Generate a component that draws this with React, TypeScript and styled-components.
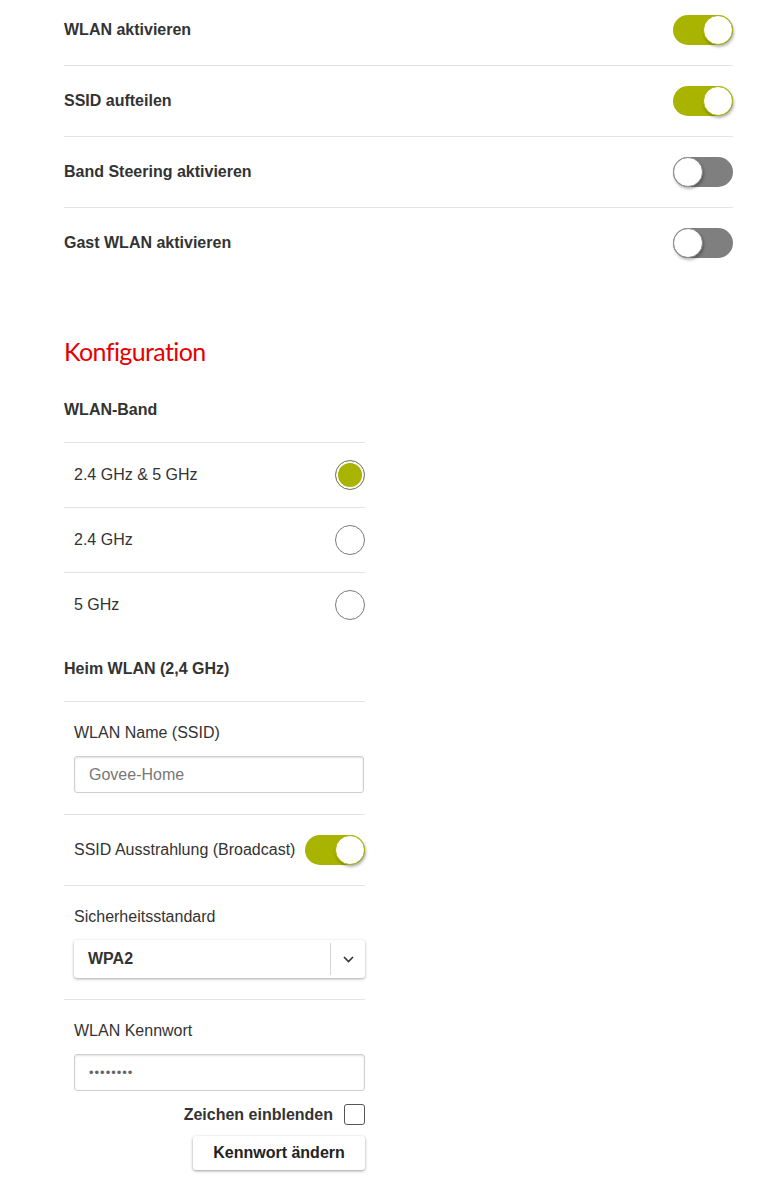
import React from "react";
import styled, { createGlobalStyle } from "styled-components";

const GlobalStyle = createGlobalStyle`
  html, body { margin: 0; padding: 0; background: #ffffff; }
  body { font-family: "Liberation Sans", Arial, sans-serif; color: #333333; font-size: 16px; }
  * { box-sizing: border-box; }
`;

const Page = styled.div`
  padding: 0 36px 40px 64px;
  margin-top: -5px;
`;

const SwitchList = styled.div`
  display: flex;
  flex-direction: column;
`;

const SwitchRow = styled.div<{ $last?: boolean }>`
  display: flex;
  align-items: center;
  justify-content: space-between;
  height: 71px;
  border-bottom: 1px solid ${(p) => (p.$last ? "transparent" : "#e3e3e3")};
`;

const RowLabel = styled.span`
  font-weight: 700;
  font-size: 16px;
  line-height: 20px;
  color: #333;
`;

const Track = styled.span<{ $on: boolean }>`
  position: relative;
  display: inline-block;
  flex: none;
  width: 60px;
  height: 30px;
  border-radius: 15px;
  background: ${(p) => (p.$on ? "#a8b400" : "#7f7f7f")};
`;

const Knob = styled.span<{ $on: boolean }>`
  position: absolute;
  top: 0;
  left: ${(p) => (p.$on ? "30px" : "0")};
  width: 30px;
  height: 30px;
  border-radius: 50%;
  background: #fff;
  border: 1px solid ${(p) => (p.$on ? "#a8b400" : "#8a8a8a")};
  box-shadow: 1px 2px 3px rgba(0, 0, 0, 0.3);
`;

const Toggle = ({ on }: { on: boolean }) => (
  <Track $on={on}>
    <Knob $on={on} />
  </Track>
);

const Heading = styled.h2`
  margin: 55px 0 0;
  height: 44px;
  font-family: "Lato", "Open Sans", sans-serif;
  font-weight: 400;
  font-size: 25px;
  line-height: 34px;
  letter-spacing: -0.6px;
  color: #e60000;
`;

const Config = styled.div`
  width: 301px;
  display: flex;
  flex-direction: column;
`;

const SubHeading = styled.div`
  height: 64px;
  display: flex;
  align-items: center;
  font-weight: 700;
  font-size: 16px;
  color: #333;
`;

const RadioRow = styled.label`
  display: flex;
  align-items: center;
  justify-content: space-between;
  height: 65px;
  padding-left: 10px;
  border-top: 1px solid #e3e3e3;
  font-size: 16px;
  color: #333;
`;

const RadioCircle = styled.span<{ $checked: boolean }>`
  flex: none;
  width: 30px;
  height: 30px;
  border-radius: 50%;
  border: 1px solid #7a7a7a;
  background: ${(p) => (p.$checked ? "#a8b400" : "#fff")};
  box-shadow: ${(p) => (p.$checked ? "inset 0 0 0 2px #fff" : "none")};
`;

const FieldBlock = styled.div<{ $last?: boolean }>`
  display: flex;
  flex-direction: column;
  padding: 21px 0 ${(p) => (p.$last ? "0" : "21px")} 10px;
  border-top: 1px solid #e3e3e3;
`;

const FieldLabel = styled.div`
  font-size: 16px;
  line-height: 20px;
  color: #333;
  margin-bottom: 13px;
`;

const TextInput = styled.div<{ $wide?: boolean }>`
  width: ${(p) => (p.$wide ? "291px" : "290px")};
  height: 37px;
  display: flex;
  align-items: center;
  padding: 0 14px;
  border: 1px solid #cfcfcf;
  border-radius: 3px;
  box-shadow: inset 0 1px 2px rgba(0, 0, 0, 0.12);
  font-size: 16px;
  color: #777;
`;

const Dots = styled.span`
  font-size: 13px;
  letter-spacing: 1px;
  color: #666;
`;

const ToggleRow = styled.div`
  display: flex;
  align-items: center;
  justify-content: space-between;
  height: 71px;
  padding-left: 10px;
  border-top: 1px solid #e3e3e3;
  font-size: 16px;
  color: #333;
`;

const Select = styled.div`
  width: 291px;
  height: 38px;
  display: flex;
  align-items: center;
  border-radius: 3px;
  background: #fff;
  box-shadow: 0 1px 3px rgba(0, 0, 0, 0.35);
`;

const SelectValue = styled.span`
  flex: 1;
  padding-left: 14px;
  font-weight: 700;
  font-size: 16px;
  color: #333;
`;

const SelectDivider = styled.span`
  width: 1px;
  height: 32px;
  background: #d6d6d6;
`;

const SelectArrow = styled.span`
  width: 34px;
  display: flex;
  justify-content: center;
  align-items: center;
`;

const CheckRow = styled.div`
  display: flex;
  align-items: center;
  justify-content: flex-end;
  gap: 11px;
  margin-top: 13px;
  font-weight: 700;
  font-size: 16px;
  color: #333;
`;

const CheckBox = styled.span`
  width: 21px;
  height: 21px;
  border: 1px solid #555;
  border-radius: 3px;
  background: #fff;
`;

const ButtonRow = styled.div`
  display: flex;
  justify-content: flex-end;
  margin-top: 11px;
`;

const Button = styled.button`
  width: 172px;
  height: 34px;
  border: none;
  border-radius: 3px;
  background: #fff;
  box-shadow: 0 1px 3px rgba(0, 0, 0, 0.4);
  font-family: "Liberation Sans", Arial, sans-serif;
  font-weight: 700;
  font-size: 16px;
  color: #222;
  cursor: pointer;
`;

const switches = [
  { label: "WLAN aktivieren", on: true },
  { label: "SSID aufteilen", on: true },
  { label: "Band Steering aktivieren", on: false },
  { label: "Gast WLAN aktivieren", on: false },
];

const bands = [
  { label: "2.4 GHz & 5 GHz", checked: true },
  { label: "2.4 GHz", checked: false },
  { label: "5 GHz", checked: false },
];

export default function App() {
  return (
    <>
      <GlobalStyle />
      <Page>
        <SwitchList>
          {switches.map((s, i) => (
            <SwitchRow key={s.label} $last={i === switches.length - 1}>
              <RowLabel>{s.label}</RowLabel>
              <Toggle on={s.on} />
            </SwitchRow>
          ))}
        </SwitchList>

        <Heading>Konfiguration</Heading>

        <Config>
          <SubHeading>WLAN-Band</SubHeading>
          {bands.map((b) => (
            <RadioRow key={b.label}>
              <span>{b.label}</span>
              <RadioCircle $checked={b.checked} />
            </RadioRow>
          ))}

          <SubHeading>Heim WLAN (2,4 GHz)</SubHeading>

          <FieldBlock>
            <FieldLabel>WLAN Name (SSID)</FieldLabel>
            <TextInput>Govee-Home</TextInput>
          </FieldBlock>

          <ToggleRow>
            <span>SSID Ausstrahlung (Broadcast)</span>
            <Toggle on={true} />
          </ToggleRow>

          <FieldBlock>
            <FieldLabel>Sicherheitsstandard</FieldLabel>
            <Select>
              <SelectValue>WPA2</SelectValue>
              <SelectDivider />
              <SelectArrow>
                <svg width="11" height="7" viewBox="0 0 11 7" fill="none">
                  <path d="M1 1l4.5 4.5L10 1" stroke="#333" strokeWidth="1.6" />
                </svg>
              </SelectArrow>
            </Select>
          </FieldBlock>

          <FieldBlock $last>
            <FieldLabel>WLAN Kennwort</FieldLabel>
            <TextInput $wide>
              <Dots>••••••••</Dots>
            </TextInput>
          </FieldBlock>

          <CheckRow>
            <span>Zeichen einblenden</span>
            <CheckBox />
          </CheckRow>

          <ButtonRow>
            <Button>Kennwort ändern</Button>
          </ButtonRow>
        </Config>
      </Page>
    </>
  );
}
